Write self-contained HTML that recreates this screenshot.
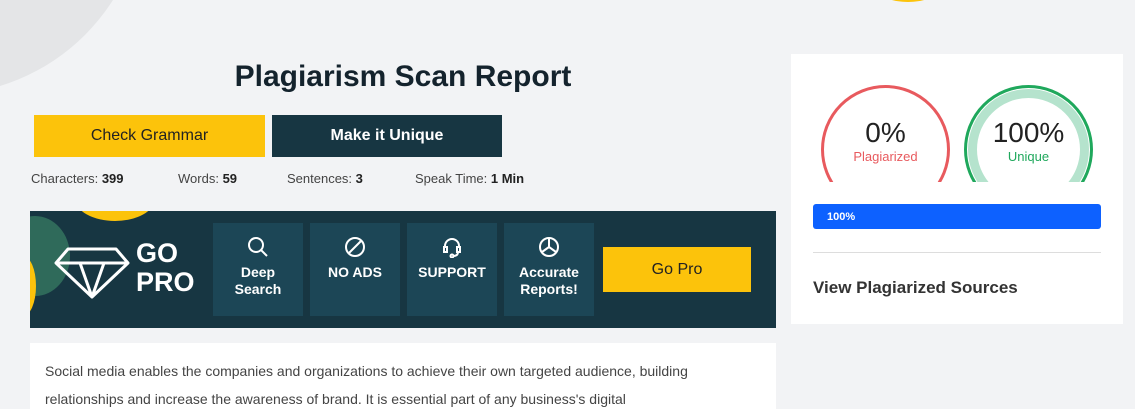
<!DOCTYPE html>
<html style="width:1135px;height:409px;overflow:hidden"><head><style>
*{margin:0;padding:0;box-sizing:border-box}
body{width:1135px;height:409px;overflow:hidden;background:#f2f3f5;font-family:"Liberation Sans",sans-serif;position:relative;color:#222}
.a{position:absolute}
.btn{position:absolute;display:flex;align-items:center;justify-content:center;font-size:16px}
.box{position:absolute;top:223px;width:90px;height:93px;background:#1c4656;color:#fff;font-weight:bold;font-size:14px;text-align:center;display:flex;flex-direction:column;align-items:center;padding-top:13px;line-height:17px}
.box svg{margin-bottom:6px}
.st{position:absolute;top:171px;font-size:13px;color:#444}
.st b{color:#222}
</style></head><body>
<div class="a" style="left:-265px;top:-315px;width:410px;height:410px;border-radius:50%;background:#e4e5e7"></div>
<div class="a" style="left:880px;top:-20px;width:56px;height:22px;border-radius:50%;background:#fcc30b"></div>

<div class="a" style="left:0;width:806px;top:60px;text-align:center;font-size:30px;font-weight:bold;color:#14232d">Plagiarism Scan Report</div>
<div class="btn" style="left:34px;top:115px;width:231px;height:42px;background:#fcc30b;color:#222">Check Grammar</div>
<div class="btn" style="left:272px;top:115px;width:230px;height:42px;background:#173642;color:#fff;font-weight:bold">Make it Unique</div>
<div class="st" style="left:31px">Characters: <b>399</b></div>
<div class="st" style="left:178px">Words: <b>59</b></div>
<div class="st" style="left:287px">Sentences: <b>3</b></div>
<div class="st" style="left:415px">Speak Time: <b>1 Min</b></div>

<div class="a" style="left:30px;top:211px;width:746px;height:117px;background:#173642;overflow:hidden">
 <div class="a" style="left:45px;top:-35px;width:80px;height:45px;border-radius:50%;background:#fcc30b"></div>
 <div class="a" style="left:-30px;top:5px;width:70px;height:80px;border-radius:50%;background:#2f6a5a"></div>
 <div class="a" style="left:-20px;top:45px;width:26px;height:60px;border-radius:50%;background:#fcc30b"></div>
 <svg class="a" style="left:24px;top:36px" width="76" height="52" viewBox="0 0 76 52" fill="none" stroke="#fff" stroke-width="3" stroke-linejoin="round"><path d="M14 2H62L74 16L38 50L2 16Z M2 16H74 M26 16L38 50L50 16"/></svg>
 <div class="a" style="left:106px;top:28px;color:#fff;font-weight:bold;font-size:27px;line-height:29px">GO<br>PRO</div>
</div>
<div class="box" style="left:213px"><svg width="22" height="22" viewBox="0 0 22 22" fill="none" stroke="#fff" stroke-width="2"><circle cx="9" cy="9" r="7"/><path d="M14 14L20 20"/></svg>Deep<br>Search</div>
<div class="box" style="left:310px"><svg width="22" height="22" viewBox="0 0 22 22" fill="none" stroke="#fff" stroke-width="2"><circle cx="11" cy="11" r="9"/><path d="M5 17L17 5"/></svg>NO ADS</div>
<div class="box" style="left:407px"><svg width="22" height="22" viewBox="0 0 22 22" fill="none" stroke="#fff" stroke-width="2"><path d="M4 12V10a7 7 0 0114 0v2"/><rect x="3" y="11" width="3" height="5"/><rect x="16" y="11" width="3" height="5"/><path d="M17 16q0 4-5 4"/><circle cx="11" cy="20" r="1.5"/></svg>SUPPORT</div>
<div class="box" style="left:504px"><svg width="22" height="22" viewBox="0 0 22 22" fill="none" stroke="#fff" stroke-width="2"><circle cx="11" cy="11" r="9"/><path d="M11 2V11L18 16M11 11L4 16"/></svg>Accurate<br>Reports!</div>
<div class="btn" style="left:603px;top:247px;width:148px;height:45px;background:#fcc30b;color:#222">Go Pro</div>

<div class="a" style="left:30px;top:343px;width:746px;height:66px;overflow:hidden;background:#fff;padding:14px 15px 0;font-size:14px;line-height:28px;color:#444">Social media enables the companies and organizations to achieve their own targeted audience, building relationships and increase the awareness of brand. It is essential part of any business's digital</div>

<div class="a" style="left:791px;top:54px;width:332px;height:270px;background:#fff">
 <div class="a" style="left:0;top:28px;width:332px;height:100px;overflow:hidden">
  <div class="a" style="left:30px;top:3px;width:129px;height:129px;border-radius:50%;border:3px solid #e85a5e"></div>
  <div class="a" style="left:173px;top:3px;width:129px;height:129px;border-radius:50%;border:3px solid #1fa85c"></div>
  <div class="a" style="left:177px;top:7px;width:121px;height:121px;border-radius:50%;border:9px solid #b5e3cd"></div>
 </div>
 <div class="a" style="left:30px;top:64px;width:129px;text-align:center;font-size:28px;color:#222;line-height:30px">0%</div>
 <div class="a" style="left:30px;top:95px;width:129px;text-align:center;font-size:13px;color:#e85a5e">Plagiarized</div>
 <div class="a" style="left:173px;top:64px;width:129px;text-align:center;font-size:28px;color:#222;line-height:30px">100%</div>
 <div class="a" style="left:173px;top:95px;width:129px;text-align:center;font-size:13px;color:#1fa85c">Unique</div>
 <div class="a" style="left:22px;top:150px;width:288px;height:25px;background:#0d61ff;border-radius:3px;color:#fff;font-size:11px;font-weight:bold;padding:7px 0 0 14px">100%</div>
 <div class="a" style="left:22px;top:198px;width:288px;height:1px;background:#ddd"></div>
 <div class="a" style="left:22px;top:224px;font-size:17px;font-weight:bold;color:#333">View Plagiarized Sources</div>
</div>
</body></html>
